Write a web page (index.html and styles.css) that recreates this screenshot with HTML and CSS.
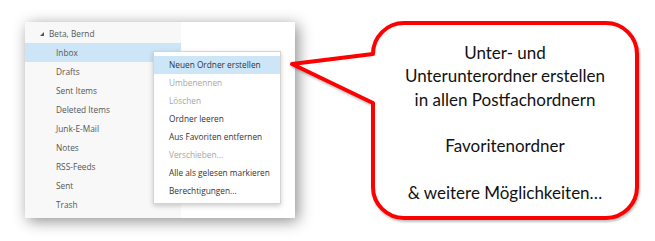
FILE: index.html
```html
<!DOCTYPE html>
<html lang="de">
<head>
	<meta charset="UTF-8">
	<title>Ordner erstellen</title>
	<link rel="stylesheet" href="styles.css">
</head>
<body>
	<div id="stage">
		<!-- Outlook folder pane -->
		<div class="window">
			<div class="folders">
				<div class="account"><span class="twisty"></span>Beta, Bernd</div>
				<div class="folder selected">Inbox</div>
				<div class="folder">Drafts</div>
				<div class="folder">Sent Items</div>
				<div class="folder">Deleted Items</div>
				<div class="folder">Junk-E-Mail</div>
				<div class="folder">Notes</div>
				<div class="folder">RSS-Feeds</div>
				<div class="folder">Sent</div>
				<div class="folder">Trash</div>
			</div>
			<div class="pane"></div>

			<ul class="menu">
				<li class="hover">Neuen Ordner erstellen</li>
				<li class="off">Umbenennen</li>
				<li class="off">Löschen</li>
				<li>Ordner leeren</li>
				<li>Aus Favoriten entfernen</li>
				<li class="off">Verschieben...</li>
				<li>Alle als gelesen markieren</li>
				<li>Berechtigungen...</li>
			</ul>
		</div>

		<!-- speech bubble -->
		<svg class="bubble" width="655" height="241" viewBox="0 0 655 241">
			<path d="M404 23 H606 A31 31 0 0 1 637 54 V187 A31 31 0 0 1 606 218 H404 A31 31 0 0 1 373 187 V103 L292 64 L373 54 A31 31 0 0 1 404 23 Z" fill="#fff" stroke="#ff0000" stroke-width="4" stroke-linejoin="round"/>
		</svg>
		<div class="bubble-text">
			Unter- und<br>
			Unterunterordner erstellen<br>
			in allen Postfachordnern<br>
			<br>
			Favoritenordner<br>
			<br>
			&amp; weitere Möglichkeiten…
		</div>
	</div>
</body>
</html>
```

FILE: styles.css
```css
body {
	margin: 0;
	background-color: #fff;
	font-family: "Open Sans", "Noto Sans", sans-serif;
}

#stage {
	position: relative;
	width: 655px;
	height: 241px;
	overflow: hidden;
}

.window {
	position: relative;
	display: flex;
	width: 270px;
	height: 196px;
	margin: 22px 0 0 25px;
	box-shadow: 3px 3px 14px rgba(0, 0, 0, 0.45);
}

.folders {
	width: 156px;
	padding-top: 2px;
	background-color: #f8f8f8;
	font-size: 8.3px;
	color: #555;
}

.pane {
	flex: 1;
	background-color: #fff;
}

.account {
	display: flex;
	align-items: center;
	height: 19px;
	padding-left: 15px;
}

.twisty {
	width: 0;
	height: 0;
	margin-right: 5px;
	border-left: 4px solid transparent;
	border-bottom: 4px solid #555;
}

.folder {
	height: 19px;
	line-height: 19px;
	padding-left: 31px;
}

.folder.selected {
	background-color: #cde6f7;
}

/* context menu */

.menu {
	position: absolute;
	left: 128px;
	top: 29px;
	width: 126px;
	margin: 0;
	padding: 4px 0 3px;
	list-style: none;
	background-color: #fff;
	border: 1px solid #d4d4d4;
	box-shadow: 0 2px 5px rgba(0, 0, 0, 0.2);
	font-size: 8.3px;
	color: #333;
}

.menu li {
	height: 18px;
	line-height: 18px;
	padding-left: 15px;
	white-space: nowrap;
}

.menu li.hover {
	background-color: #cde6f7;
}

.menu li.off {
	color: #a6a6a6;
}

/* callout */

.bubble {
	position: absolute;
	left: 0;
	top: 0;
	filter: drop-shadow(1px 2px 1px rgba(0, 0, 0, 0.25));
}

.bubble-text {
	position: absolute;
	left: 373px;
	top: 41px;
	width: 264px;
	text-align: center;
	font-family: "Lato", "Open Sans", sans-serif;
	font-size: 17px;
	line-height: 23.3px;
	color: #111;
}
```
